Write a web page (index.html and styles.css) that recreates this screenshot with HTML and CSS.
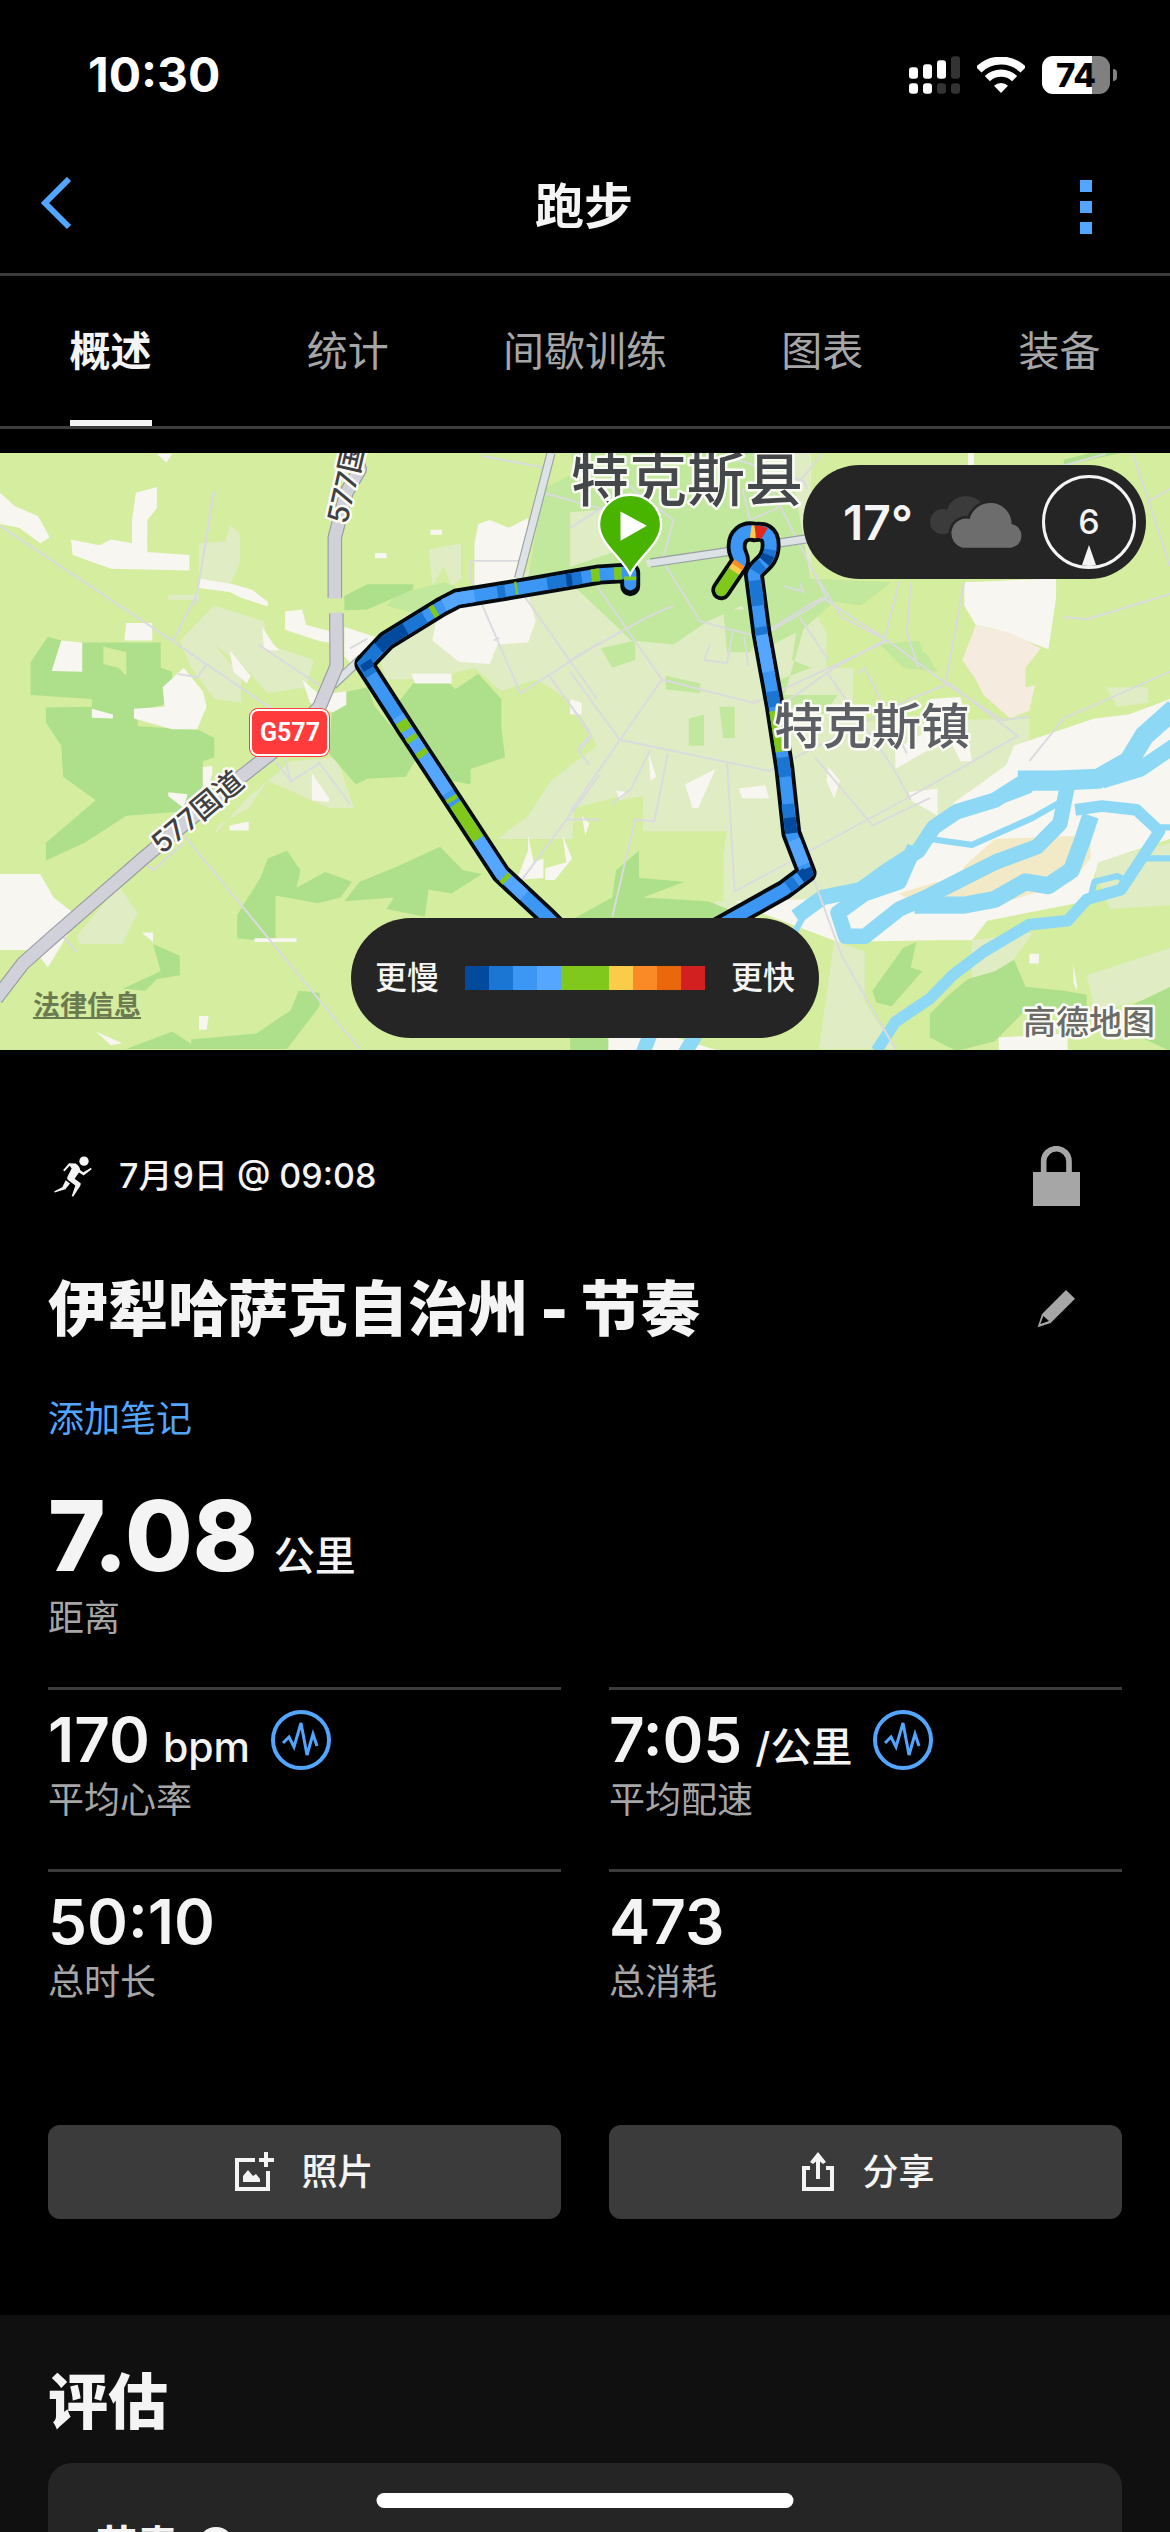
FILE: index.html
```html
<!DOCTYPE html>
<html lang="zh-CN">
<head>
  <meta charset="utf-8">
  <meta name="viewport" content="width=device-width, initial-scale=1">
  <title>跑步</title>
  <link rel="stylesheet" href="styles.css">
</head>
<body>
  <div class="status-bar">
    <span class="time">10:30</span>
    <div class="status-icons">
      <svg class="signal" viewBox="81 47 153 112">
        <g fill="#fff">
          <rect x="81" y="80" width="27" height="34" rx="9"/>
          <rect x="123" y="71" width="27" height="43" rx="9"/>
          <rect x="165" y="59" width="27" height="55" rx="9"/>
          <rect x="81" y="128" width="27" height="31" rx="9"/>
          <rect x="123" y="128" width="27" height="31" rx="9"/>
        </g>
        <g fill="#333">
          <rect x="207" y="47" width="27" height="67" rx="9"/>
          <rect x="165" y="128" width="27" height="31" rx="9"/>
          <rect x="207" y="128" width="27" height="31" rx="9"/>
        </g>
      </svg>
      <svg class="wifi" viewBox="285 45 144 108" fill="none" stroke="#fff">
        <path d="M290 83A96 96 0 0 1 424 83" stroke-width="24"/>
        <path d="M316 110A59 59 0 0 1 398 110" stroke-width="22"/>
        <path d="M357 153L336 131A31 31 0 0 1 378 131Z" fill="#fff" stroke="none"/>
      </svg>
      <span class="battery">74</span>
    </div>
  </div>

  <header class="header">
    <button type="button" class="icon-button" aria-label="返回">
      <svg class="back" viewBox="0 0 32 60"><path d="M29 2L5 26L29 50" fill="none" stroke="#52a6ff" stroke-width="6"/></svg>
    </button>
    <h1>跑步</h1>
    <button type="button" class="icon-button" aria-label="更多">
      <svg class="more" viewBox="0 0 12 54" fill="#52a6ff"><path d="M0 0h12v12H0zM0 21h12v12H0zM0 42h12v12H0z"/></svg>
    </button>
  </header>

  <nav class="tabs">
    <div class="tab-list">
      <a href="#" class="active">概述</a>
      <a href="#">统计</a>
      <a href="#">间歇训练</a>
      <a href="#">图表</a>
      <a href="#">装备</a>
    </div>
  </nav>

  <main>
    <section class="map">
      <svg class="map-canvas" viewBox="0 0 1170 597" preserveAspectRatio="xMidYMid slice">
        <rect width="1170" height="597" fill="#d4ed9f"/>
        <g transform="translate(0 -3) scale(.38265 .38903)">
          <!-- farmland -->
          <g fill="#e0ecc3">
            <path d="M1490 0H2120V400L2160 470V560H2230V700L2690 690V800L2500 900L2400 1000L2250 1130L1860 1210L1900 980H1680V890L1560 910V1000H1300L1380 940L1440 850L1560 760L1500 650L1400 590L1310 620L1240 560L1120 590L1010 590L990 530L1150 420L1400 300L1430 170L1500 90Z"/>
            <path d="M520 240L590 235L600 190L627 215V290L600 350L520 345ZM470 490L560 400L690 440L700 500L820 540L800 610L700 625L640 560L560 500L630 580V650L560 640L500 560ZM440 372H520V385H440ZM1120 255L1205 240V330L1180 350L1160 300L1130 350ZM560 990L640 900L760 800L880 790L925 920H860L700 850L650 920L570 965ZM0 1180L60 1170L80 1240L0 1265ZM200 1250L310 1120L360 1190L320 1270H210Z"/>
            <path d="M2890 610H3000V650L2920 660ZM2850 1060L3058 1010V1170L2900 1180ZM2540 1260L2700 1240L2620 1350L2540 1360ZM2180 1260L2260 1290V1420L2340 1540H2140ZM2840 1350L3058 1280V1400L2860 1440Z"/>
          </g>
          <!-- town green -->
          <g fill="#c1e89c">
            <path d="M1490 8H2060L2120 340L2080 470L1980 520L1940 400L1850 440L1760 500L1650 490L1500 350L1380 330L1420 100L1500 60Z"/>
            <path d="M1570 510L1660 490V540L1600 560ZM1740 580L1830 600V625L1740 615ZM1890 410H1990V480L1960 520H1900ZM2100 330L2330 340L2250 400L2180 390L2100 460L2050 630H2190L2150 680L2090 650L2010 700V600L2120 560L2070 540ZM1880 660H1920V740H1890ZM1800 690L1840 680V760H1800ZM2300 500L2400 490L2450 570L2360 560ZM1040 370L1160 340L1190 350L1120 430L1010 400Z"/>
          </g>
          <path d="M1490 160L1610 150V260L1490 300ZM2200 130H2310V220L2150 250Z" fill="#e0ecc3"/>
          <path d="M2410 410H2495V530L2410 520ZM1500 920L1620 890L1640 1010L1890 980V1160L1600 1170L1490 1120Z" fill="#d4ed9f"/>
          <!-- woods -->
          <g fill="#aedf8b">
            <path d="M80 545L125 480L180 495H420V560L450 570V650L360 670V710L520 720L560 740V790L530 800V880L470 930L330 940L220 1010L120 1055V1010L250 900L165 840L160 760L120 700V662L240 660V640L80 630Z"/>
            <path d="M900 375L960 345H1080V358L960 410L900 412ZM870 630L960 610L980 660L1090 790L1060 840L960 845L930 860L860 780ZM1080 600L1160 585L1190 615L1250 575L1310 640V715L1320 790L1230 820V860L1180 850L1110 740L1040 650Z"/>
            <path d="M680 1100L700 1050L750 1030L785 1080L775 1125L850 1085L920 1110L890 1150L830 1165L720 1145V1265L620 1255V1195ZM900 1160L940 1110L1040 1070L1150 1020L1210 1080L1260 1090L1180 1140L1120 1130L1110 1200L1010 1180L1030 1150ZM320 1385L420 1340L400 1270L470 1300V1350L410 1360L380 1390ZM670 1500L760 1440L780 1390L835 1395V1430L750 1540H500V1515ZM330 1540L450 1495L520 1540Z"/>
            <path d="M1610 1080L1670 1030V1100L1790 1110L1680 1150L1850 1160L1980 1210H1490L1600 1150ZM2280 1390L2360 1280L2395 1265L2380 1330L2410 1340L2330 1430L2290 1420ZM2430 1450L2480 1400L2530 1360L2600 1340L2650 1310L2680 1380L2780 1390L2840 1400V1430L2680 1440L2600 1520L2500 1545L2430 1510ZM2850 8H2930L2780 40V25ZM1490 1500L1640 1520L1700 1545H1490ZM2930 1440L3058 1380V1545L2960 1500Z"/>
          </g>
          <path d="M270 505L330 520V580L310 560L270 550Z" fill="#d4ed9f"/>
          <!-- bare ground -->
          <g fill="#f8f6f1">
            <path d="M0 110L40 145L100 170L130 225L105 240L50 200L0 190ZM355 110L410 95V150L385 180V262L495 270V310L290 305L190 270L185 230L260 245L290 230L345 240V180ZM160 490L215 495V570L135 568ZM330 445H398V490H325ZM425 610L480 560L530 620L540 660L515 718H450L350 690V665L430 660ZM520 330L610 345L660 360L700 390V402L630 380L600 365L520 355ZM685 455L715 500L730 515H690ZM745 415L790 410L800 450L880 470V500L830 490L745 462ZM600 515L655 580L645 600L610 570ZM790 590L835 630L905 620V655L870 675L810 650ZM900 455L980 480L950 590L900 530ZM410 10H450L435 32ZM980 265H1010V278H980ZM1125 205H1155V218H1125ZM240 665L295 680V690L240 688Z"/>
            <path d="M1250 190L1280 180L1330 200L1380 175V230L1350 330L1240 350V240ZM1270 390L1380 370L1400 440L1380 495L1300 500L1280 550L1200 545L1130 490L1140 440L1200 400ZM1075 575H1180V600H1085ZM530 815L555 812V830L540 885H530ZM440 880L490 885L480 920L440 890ZM815 830L860 895V905L815 900ZM600 965L650 955V978H600ZM0 1090H105L140 1150L205 1200L125 1330L90 1285H0ZM370 1240H400V1265ZM520 1455H545L540 1490H520ZM250 1495L320 1525L290 1530ZM665 1255H775V1265H665ZM1380 990L1395 1060L1420 1050V1100L1350 1105L1380 1030ZM1470 990L1495 1050L1450 1105H1425V1075L1480 1060Z"/>
            <path d="M2520 340L2760 330V380L2740 512L2600 460L2550 450L2520 400ZM2430 640L2510 635L2520 680L2540 800L2510 800L2480 740L2340 820V770L2410 730ZM2650 760L2860 690L2950 680L3058 640V1000L2870 1060L2840 1160L2580 1210L2540 1260L2440 1260L2190 1265L1990 1190L1920 1160L2290 1150L2400 1000L2500 900L2560 860L2630 810ZM1930 870L2000 862L2010 895H1940ZM1790 860L1870 820L1825 920H1810ZM2165 815L2195 850L2180 895L2160 850ZM1490 640L1520 650V680H1490ZM1695 780L1715 840L1700 850ZM1610 875L1640 880L1620 900ZM1520 940L1540 960L1530 990ZM2375 880L2450 870V940L2380 900ZM1590 1500L1700 1490L1880 1545H1590ZM2690 1295H2715V1320H2690ZM2610 1510L2790 1500V1545H2610ZM2805 1320L2815 1380V1390L2805 1370ZM2530 8H2545V55L2530 45Z"/>
          </g>
          <path d="M2550 450L2640 470L2720 510L2680 560V610L2705 605L2690 670L2640 690L2570 630L2550 590L2515 540Z" fill="#f6ebdf"/>
          <path d="M2520 1070L2600 1000L2850 990L2850 1050L2800 1110L2600 1170L2420 1185L2350 1140L2450 1110L2500 1120Z" fill="#f2eac6"/>
          <!-- river -->
          <g fill="none" stroke="#8dd9f5" stroke-linejoin="round">
            <path d="M3070 665L2990 735L2950 800L2870 845L2760 850L2660 850" stroke-width="52"/>
            <path d="M2680 850L2600 900L2500 930L2440 970L2400 1030L2320 1080L2250 1130L2150 1150L2080 1200" stroke-width="40"/>
            <path d="M3070 760L2980 820L2880 850M2790 860L2770 960L2710 1020L2600 1060L2500 1110L2420 1150L2350 1180L2260 1250L2210 1250L2190 1190L2260 1140L2350 1110L2390 1020" stroke-width="40"/>
            <path d="M2850 940L2830 1000L2800 1080L2740 1120L2680 1110L2600 1155L2520 1170L2390 1170" stroke-width="44"/>
            <path d="M2810 925L2880 915L2970 925L3030 980L2990 1040L2950 1100L2930 1130L2840 1155L2790 1210L2690 1220L2570 1290L2490 1350L2430 1410L2340 1470L2290 1545" stroke-width="30"/>
            <path d="M2990 1050L3070 1050M3020 970H3070M2850 1150L2860 1110L2920 1095L2950 1110M2430 1000L2540 1015L2700 945L2780 900M2580 915L2690 875L2650 860M2200 1170L2330 1125L2370 1050M2110 1180L2060 1270" stroke-width="16"/>
            <path d="M1700 1500L1680 1550M1820 1500L1790 1550" stroke-width="38"/>
          </g>
          <!-- minor roads -->
          <g fill="none" stroke="#d9dbdf" stroke-width="5">
            <path d="M0 195L450 490L710 665L760 852L835 805L915 910M560 105L515 370L452 490M558 110L510 400M465 576L517 584L540 550M675 500L850 615M915 510L960 485M480 990L940 1540M375 1060L400 1080L480 1010M165 1250L200 1290M710 790L760 850"/>
            <path d="M1230 285H1360M1230 285V330L1360 625L1567 495M1370 375L1560 640M1435 580L1545 730L1510 770L1540 810M1360 1110L1567 835M1480 950H1567M1260 15L1420 45M1420 110L1567 150M1290 490L1305 483"/>
            <path d="M1490 540L1690 430L1760 400M1560 350L1730 590L1970 650L2320 490L2200 430L2130 320M1490 570L1620 745L2010 825L2380 640L2480 600L2660 735L2380 890L1920 1135L1900 800M1730 590L1490 930M1735 290L1830 440L1980 480L2120 395L2150 380L2320 490L2480 605L2620 695L2690 685M1730 290L1760 180L1600 60M1990 480L2160 380L1970 10M1940 100L1960 180L2030 150L2150 10M2350 340L2310 490L2180 560L2050 650M2520 340L2470 605M2160 570L2330 810L2380 900M2240 575L2260 560L2370 780M1620 745L1490 930M1700 770L1650 870L1600 910M1745 780L1710 955L1660 950L1600 1200M2130 790L2280 965L2430 895M1490 655L1545 735L1520 770M2090 430L2165 540M2110 1060L2200 1300L2340 1540M2690 800L2780 690L3058 570M2780 430L2840 435L3058 370M2960 8L3058 300M2780 40L2890 10M3005 130L3058 100"/>
            <path d="M1910 20L2100 80L2110 100M1490 200L1620 120L1680 250M1840 540L1900 548L1915 465M1840 540L1855 500M2050 350L2100 365L2090 340M2380 340L2370 470L2400 560M1955 555L1945 480"/>
          </g>
          <path d="M1440 8L1355 330M1700 290L1910 260M2030 240L2110 228M870 605L945 535" fill="none" stroke="#9aa2a5" stroke-width="24"/>
          <path d="M1440 8L1355 330M1690 292L1910 260M2030 240L2110 228M865 609L945 535" fill="none" stroke="#dde3e4" stroke-width="18"/>
          <!-- G577 -->
          <g fill="none" stroke-linejoin="round">
            <path d="M920 -10L940 50L905 110L875 225V380M879 420L880 555L835 660L760 740L630 840L380 1045L140 1250L60 1320L-10 1410" stroke="#9b9ca4" stroke-width="38"/>
            <path d="M920 -10L940 50L905 110L875 225V382M879 418L880 555L835 660L760 740L630 840L380 1045L140 1250L60 1320L-10 1410" stroke="#d1d2d9" stroke-width="32"/>
          </g>
          <!-- track -->
          <g fill="none" stroke-linecap="round" stroke-linejoin="round">
            <g stroke="#060b10" stroke-width="52">
              <path d="M1647 350V315L1567 320L1480 335L1350 357L1195 382L1150 405L1010 490L952 550L1060 715L1250 1000L1310 1090L1430 1200L1510 1280"/>
              <path d="M1850 1240L2050 1130L2108 1087L2068 985L2050 820L2025 660L1990 470L1970 320C1980 295 2014 290 2014 245C2014 212 1994 208 1972 211C1945 204 1924 222 1925 250C1925 268 1938 275 1933 290L1885 360"/>
            </g>
            <g stroke="#3c96f4" stroke-width="32">
              <path d="M1647 345V315L1567 320L1480 335L1350 357L1195 382L1150 405L1010 490L952 550L1060 715L1250 1000L1310 1090L1430 1200L1510 1280"/>
              <path d="M1850 1240L2050 1130L2108 1087L2068 985L2050 820L2025 660L1990 470L1970 320C1980 295 2014 290 2014 245C2014 212 1994 208 1972 211C1945 204 1924 222 1925 250C1925 268 1938 275 1933 290L1885 360"/>
            </g>
          </g>
          <g fill="none" stroke-width="32">
            <path d="M1240 375L1195 382L1160 399M1040 685L1060 715L1170 880M1250 1000L1310 1090L1370 1145M1990 470L2008 570M2075 1002L2100 1066" stroke="#54a6ff"/>
            <path d="M1520 328L1430 343M1320 362L1300 365M1110 430L1060 460M990 507L952 550L970 578M1973 335L1982 400M1988 455L1991 475M2018 620L2025 660M2046 790L2052 840M2058 910L2068 985M2060 1124L2080 1109M1974 313Q1980 303 1992 293M2013 256Q2010 274 1998 287" stroke="#1b75d3"/>
            <path d="M1060 460L1010 490L990 509M955 545L965 562M1480 335L1495 333M2063 945L2068 985M2104 1077L2108 1087L2092 1099M2008 270Q2004 280 1998 287" stroke="#014a9e"/>
            <path d="M1552 322H1567M1605 318L1625 317M1545 323L1567 320M1140 411L1128 418M1048 697L1062 720M1072 735L1080 747M1098 773L1107 786M1178 892L1184 902M1190 910L1250 1000M1316 1097L1325 1106M2026 670L2043 775M1922 306L1885 360M1647 325V335M1346 355L1352 354" stroke="#80c91c"/>
            <path d="M1930 294L1918 312M1962 209L1976 211" stroke="#fbcb4a"/>
            <path d="M1933 290L1926 300" stroke="#fa8a25"/>
            <path d="M1974 211Q1988 209 1998 215" stroke="#e12a1e"/>
          </g>
          <circle cx="1885" cy="360" r="16" fill="#80c91c"/>
        </g>

        <g class="map-text">
          <text x="571" y="48" font-size="58" fill="#45484a">特克斯县</text>
          <text x="774" y="291" font-size="49" fill="#5c5f63">特克斯镇</text>
          <text transform="translate(162 402) rotate(-40)" font-size="29" fill="#3f4043">577国道</text>
          <text transform="translate(347 72) rotate(-77)" font-size="29" fill="#3f4043">577国</text>
          <text x="1023" y="581" font-size="33" fill="#6b6c66">高德地图</text>
        </g>

        <rect x="249" y="255" width="81" height="49" rx="9" fill="#ff3b3b"/>
        <rect x="251" y="257" width="77" height="45" rx="7" fill="none" stroke="#fff" stroke-width="2"/>
        <text class="road-number" x="290" y="288">G577</text>

        <!-- start pin -->
        <g transform="translate(570 -3) scale(.38265 .38903)">
          <path d="M157 320C135 275 76 240 76 192A81 77 0 0 1 238 192C238 240 179 275 157 320Z" fill="#48b400" stroke="#fff" stroke-width="6"/>
          <path d="M132 158L201 195L132 233Z" fill="#fff"/>
        </g>
      </svg>

      <div class="weather">
        <span class="temperature">17°</span>
        <svg class="clouds" viewBox="454 138 282 156">
          <g fill="#3b3b3b"><circle cx="492" cy="215" r="38"/><circle cx="562" cy="198" r="60"/></g>
          <path d="M552 293A44 44 0 1 1 573 207A64 64 0 0 1 699 222A36 36 0 0 1 698 293Z" fill="#6d6d6d" stroke="#252525" stroke-width="16" paint-order="stroke"/>
        </svg>
        <div class="wind">
          <span>6</span>
          <svg viewBox="0 0 14 21" fill="#f4f4f4"><path d="M7 0L14 20Q7 22 0 20Z"/></svg>
        </div>
      </div>

      <div class="legend">
        <span>更慢</span>
        <div class="scale">
          <i class="s1"></i><i class="s2"></i><i class="s3"></i><i class="s4"></i><i class="s5"></i>
          <i class="s5"></i><i class="s6"></i><i class="s7"></i><i class="s8"></i><i class="s9"></i>
        </div>
        <span>更快</span>
      </div>

      <a href="#" class="legal">法律信息</a>
    </section>

    <section class="activity">
      <div class="row">
        <div class="date">
          <svg class="runner" viewBox="72 76 114 122" fill="#f4f4f4">
            <circle cx="162" cy="91" r="14"/>
            <path d="M117 97L137 98Q148 104 151 118L160 124L183 111L185 115L161 134L147 125L134 144L152 157Q153 162 150 166L130 197L125 196L136 164L113 147Q110 142 113 136L125 113L119 105L104 121L99 118Z"/>
            <path d="M107 148L120 158L106 175L74 185L73 181L97 169Z"/>
          </svg>
          <span>7月9日 @ 09:08</span>
        </div>
        <button type="button" class="icon-button" aria-label="隐私">
          <svg class="lock" viewBox="68 48 141 180">
            <path d="M100 130V94A38 38 0 0 1 176 94V130" fill="none" stroke="#a6a6a6" stroke-width="17"/>
            <path d="M68 126H209V228H68Z" fill="#a6a6a6"/>
          </svg>
        </button>
      </div>

      <div class="row name">
        <h2>伊犁哈萨克自治州 - 节奏</h2>
        <button type="button" class="icon-button" aria-label="编辑">
          <svg class="pencil" viewBox="68 478 141 114">
            <path d="M167 478L194 504L121 577L82 590L95 550ZM99 556L90 580L116 571Z" fill="#a6a6a6" fill-rule="evenodd"/>
          </svg>
        </button>
      </div>

      <a href="#" class="add-note">添加笔记</a>

      <div class="distance"><strong>7.08</strong><span class="unit">公里</span></div>
      <p class="label">距离</p>

      <div class="stats">
        <div class="stat">
          <div class="value">
            <strong>170</strong><span class="unit">bpm</span>
            <svg class="pulse" viewBox="0 0 60 60" fill="none" stroke="#52a6ff"><circle cx="30" cy="30" r="28" stroke-width="4"/><path d="M12 33L18 27L23 37L30 13L36 45L42 24L46 36" stroke-width="3"/></svg>
          </div>
          <p class="label">平均心率</p>
        </div>
        <div class="stat">
          <div class="value">
            <strong>7:05</strong><span class="unit">/公里</span>
            <svg class="pulse" viewBox="0 0 60 60" fill="none" stroke="#52a6ff"><circle cx="30" cy="30" r="28" stroke-width="4"/><path d="M12 33L18 27L23 37L30 13L36 45L42 24L46 36" stroke-width="3"/></svg>
          </div>
          <p class="label">平均配速</p>
        </div>
        <div class="stat">
          <div class="value"><strong>50:10</strong></div>
          <p class="label">总时长</p>
        </div>
        <div class="stat">
          <div class="value"><strong>473</strong></div>
          <p class="label">总消耗</p>
        </div>
      </div>

      <div class="actions">
        <button type="button">
          <svg viewBox="0 0 40 40" fill="none" stroke="#f4f4f4" stroke-width="4">
            <path d="M20 8H2V37H33V19M31 0V15M24 8H39"/>
            <path d="M8 30V24L13 18L18 24L21 22L25 27V30Z" fill="#f4f4f4" stroke="none"/>
          </svg>
          照片
        </button>
        <button type="button">
          <svg viewBox="-6 0 40 40" fill="none" stroke="#f4f4f4" stroke-width="4">
            <path d="M8 16H2V37H30V16H24M16 27V4"/>
            <path d="M16 0L24 10L21 12L16 8L11 12L8 10Z" fill="#f4f4f4" stroke="none"/>
          </svg>
          分享
        </button>
      </div>
    </section>

    <section class="evaluation">
      <h2>评估</h2>
      <div class="card">
        <span>节奏</span>
        <svg class="help" viewBox="0 0 36 36"><circle cx="18" cy="18" r="18" fill="#f4f4f4"/><path d="M12 14a6 6 0 1 1 8 6q-2 1-2 3M18 26v3" fill="none" stroke="#252525" stroke-width="3"/></svg>
      </div>
    </section>
  </main>

  <div class="home-indicator"></div>
</body>
</html>
```
FILE: styles.css
```css
* {
  box-sizing: border-box;
}

body {
  display: flex;
  flex-direction: column;
  height: 100vh;
  margin: 0;
  overflow: hidden;
  background-color: #000;
  color: #f4f4f4;
  font-family: Inter, "Noto Sans CJK SC", sans-serif;
}

h1,
h2,
p {
  margin: 0;
}

a {
  color: inherit;
  text-decoration: none;
}

button {
  padding: 0;
  border: none;
  background: none;
  color: inherit;
  font-family: inherit;
  cursor: pointer;
}

svg {
  display: block;
  flex: none;
}

/* status bar */
.status-bar {
  display: flex;
  justify-content: space-between;
  align-items: center;
  height: 141px;
  padding: 8px 60px 0 88px;
  color: #fff;
}

.time {
  font-size: 48px;
  font-weight: 700;
}

.status-icons {
  display: flex;
  align-items: center;
  gap: 17px;
}

.signal {
  width: 51px;
  height: 38px;
}

.wifi {
  width: 48px;
  height: 36px;
}

.battery {
  position: relative;
  width: 68px;
  height: 38px;
  border-radius: 11px;
  background: linear-gradient(to right, #fff 74%, #808080 74%);
  color: #000;
  font-size: 33px;
  font-weight: 800;
  line-height: 38px;
  text-align: center;
}

.battery::after {
  content: "";
  position: absolute;
  top: 13px;
  right: -7px;
  width: 4px;
  height: 12px;
  border-radius: 0 4px 4px 0;
  background-color: #808080;
}

/* header */
.header {
  display: flex;
  justify-content: space-between;
  align-items: center;
  height: 135px;
  padding: 0 78px 0 40px;
  border-bottom: 3px solid #3c3c3c;
}

.header h1 {
  flex: 1;
  padding-left: 16px;
  font-size: 49px;
  line-height: 60px;
  text-align: center;
}

.back {
  width: 32px;
  height: 60px;
}

.more {
  width: 12px;
  height: 54px;
}

/* tabs */
.tabs {
  border-bottom: 3px solid #3c3c3c;
  overflow: hidden;
}

.tab-list {
  display: grid;
  grid-template-columns: repeat(5, 1fr);
  justify-items: center;
  margin: 0 -8px;
}

.tab-list a {
  height: 150px;
  border-bottom: 6px solid transparent;
  color: #a6a6a6;
  font-size: 41px;
  line-height: 150px;
}

.tab-list .active {
  border-color: #f4f4f4;
  color: #f4f4f4;
  font-weight: 700;
}

main {
  flex: 1;
  padding-top: 24px;
  overflow-y: auto;
  scrollbar-width: none;
}

/* map */
.map {
  position: relative;
}

.map-canvas {
  width: 100%;
  height: 597px;
}

.map-text {
  font-weight: 500;
  paint-order: stroke;
  stroke: #fbfbf6;
  stroke-width: 5px;
  stroke-linejoin: round;
}

.road-number {
  fill: #fff;
  font-family: Roboto, sans-serif;
  font-size: 25px;
  font-weight: 700;
  text-anchor: middle;
}

.weather,
.legend {
  position: absolute;
  display: flex;
  align-items: center;
  justify-content: space-between;
  border-radius: 60px;
  background-color: #252525;
}

.weather {
  top: 12px;
  right: 24px;
  width: 343px;
  height: 114px;
  padding: 0 10px 0 40px;
}

.temperature {
  font-size: 48px;
  font-weight: 600;
}

.clouds {
  width: 94px;
  height: 52px;
}

.wind {
  position: relative;
  width: 94px;
  height: 94px;
  border: 3px solid #f4f4f4;
  border-radius: 50%;
  font-size: 34px;
  font-weight: 500;
  line-height: 88px;
  text-align: center;
}

.wind svg {
  position: absolute;
  bottom: 0;
  left: 37px;
  width: 14px;
  height: 21px;
}

.legend {
  bottom: 12px;
  left: 50%;
  width: 468px;
  height: 120px;
  padding: 0 24px;
  transform: translateX(-50%);
  font-size: 32px;
  font-weight: 500;
  line-height: 48px;
}

.scale {
  display: flex;
}

.scale i {
  width: 24px;
  height: 24px;
}

.s1 { background-color: #014a9e; }
.s2 { background-color: #1b75d3; }
.s3 { background-color: #3c96f4; }
.s4 { background-color: #54a6ff; }
.s5 { background-color: #80c91c; }
.s6 { background-color: #fbcb4a; }
.s7 { background-color: #fa8a25; }
.s8 { background-color: #ea670c; }
.s9 { background-color: #d22020; }

.legal {
  position: absolute;
  bottom: 24px;
  left: 33px;
  color: #6c7a50;
  font-size: 27px;
  font-weight: 700;
  line-height: 40px;
  text-decoration: underline;
}

/* activity */
.activity {
  padding: 96px 48px;
}

.row {
  display: flex;
  justify-content: space-between;
  align-items: center;
  padding-right: 42px;
}

.date {
  display: flex;
  align-items: center;
  gap: 27px;
  padding-left: 6px;
  font-size: 34px;
  font-weight: 500;
  line-height: 48px;
}

.runner {
  width: 38px;
  height: 41px;
}

.lock {
  width: 47px;
  height: 60px;
}

.pencil {
  width: 47px;
  height: 38px;
}

.name {
  margin-top: 67px;
}

h2 {
  font-size: 60px;
  font-weight: 900;
  line-height: 72px;
}

.add-note {
  display: block;
  width: fit-content;
  margin-top: 50px;
  color: #52a6ff;
  font-size: 36px;
  line-height: 48px;
}

.distance {
  display: flex;
  align-items: baseline;
  gap: 16px;
  margin-top: 45px;
}

.distance strong {
  font-size: 98px;
  font-weight: 800;
  line-height: 96px;
}

.unit {
  font-size: 41px;
  font-weight: 500;
  line-height: 48px;
}

.label {
  margin-top: 8px;
  color: #a6a6a6;
  font-size: 36px;
  line-height: 44px;
}

.distance + .label {
  margin-top: 12px;
}

.stats {
  display: grid;
  grid-template-columns: 1fr 1fr;
  column-gap: 48px;
  margin-top: 47px;
}

.stat {
  padding: 20px 0 47px;
  border-top: 3px solid #3c3c3c;
}

.value {
  display: flex;
  align-items: baseline;
  gap: 13px;
  height: 60px;
}

.value strong {
  font-size: 62px;
  font-weight: 600;
  line-height: 60px;
}

.pulse {
  align-self: center;
  width: 60px;
  height: 60px;
  margin-left: 8px;
}

.actions {
  display: grid;
  grid-template-columns: 1fr 1fr;
  gap: 48px;
  margin-top: 74px;
}

.actions button {
  display: flex;
  justify-content: center;
  align-items: center;
  gap: 26px;
  height: 94px;
  border-radius: 12px;
  background-color: #3b3b3b;
  font-size: 36px;
  font-weight: 500;
  line-height: 48px;
}

.actions svg {
  width: 40px;
  height: 40px;
}

/* evaluation */
.evaluation {
  padding: 51px 48px 96px;
  background-color: #101010;
}

.card {
  display: flex;
  align-items: center;
  gap: 20px;
  margin-top: 25px;
  padding: 58px 48px;
  border-radius: 24px;
  background-color: #252525;
  font-size: 41px;
  font-weight: 700;
  line-height: 48px;
}

.help {
  width: 36px;
  height: 36px;
}

.home-indicator {
  position: fixed;
  bottom: 24px;
  left: 50%;
  width: 417px;
  height: 15px;
  border-radius: 8px;
  background-color: #fff;
  transform: translateX(-50%);
}
```
